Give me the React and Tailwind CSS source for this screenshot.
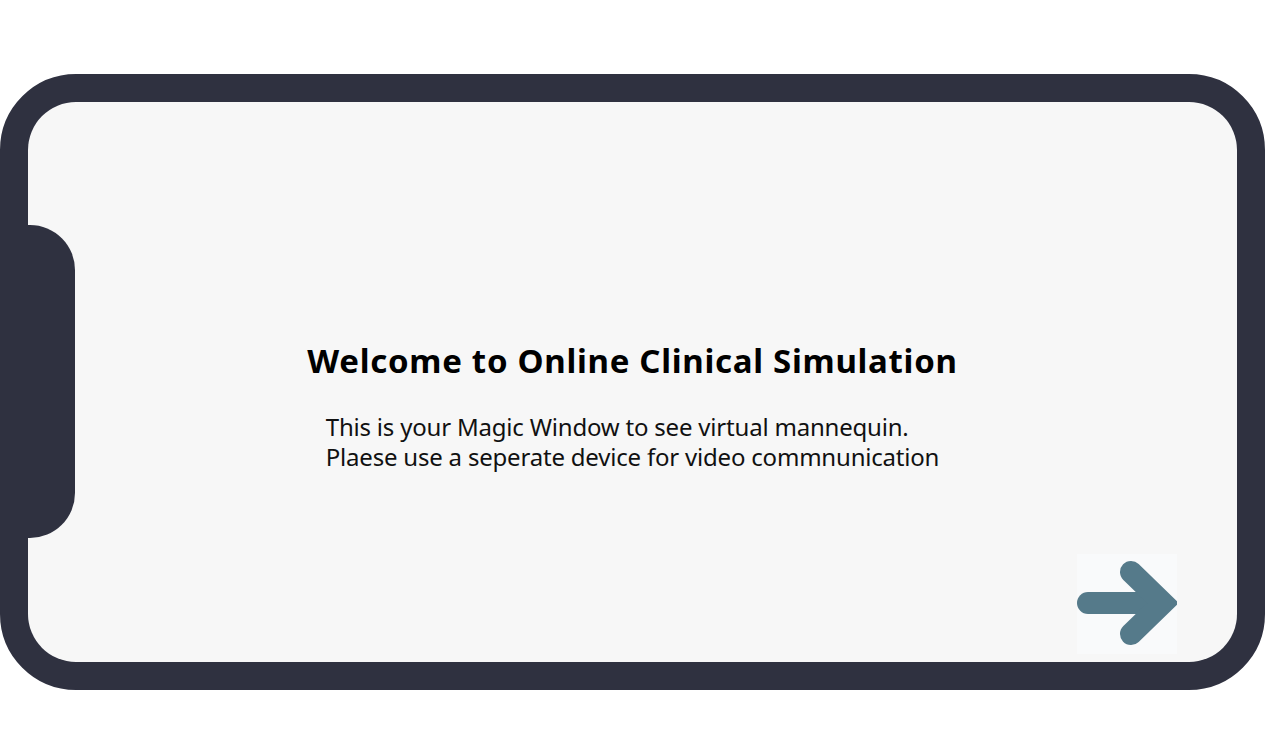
function ArrowIcon() {
  return (
    <svg width="100" height="100" viewBox="0 0 100 100" fill="none">
      <path
        d="M11 49 H84"
        stroke="#557a8a"
        strokeWidth="22"
        strokeLinecap="round"
      />
      <path
        d="M54 18 L86 49 L54 80"
        stroke="#557a8a"
        strokeWidth="22"
        strokeLinecap="round"
        strokeLinejoin="miter"
      />
    </svg>
  );
}

function App() {
  return (
    <div className="min-h-screen bg-white pt-[74px] font-['Noto_Sans',sans-serif]">
      <div className="w-full h-[616px] rounded-[76px] border-[28px] border-[#2f3140] bg-[#2f3140]">
        <div className="relative h-full w-full rounded-[48px] bg-[#f7f7f7] flex flex-col items-center">
          <div className="absolute left-0 top-[123px] w-[47px] h-[313px] rounded-r-[45px] bg-[#2f3140]" />

          <h1 className="pt-[238px] text-[33px] font-bold text-black leading-[1.25] tracking-[0.7px]">
            Welcome to Online Clinical Simulation
          </h1>

          <div className="mt-[31px] text-[24px] leading-[30px] text-[#111] text-left tracking-[-0.2px]">
            <p>This is your Magic Window to see virtual mannequin.</p>
            <p>Plaese use a seperate device for video commnunication</p>
          </div>

          <button className="mt-auto mb-[8px] self-end mr-[60px] bg-[#f9fafb]">
            <ArrowIcon />
          </button>
        </div>
      </div>
    </div>
  );
}

export default App;
